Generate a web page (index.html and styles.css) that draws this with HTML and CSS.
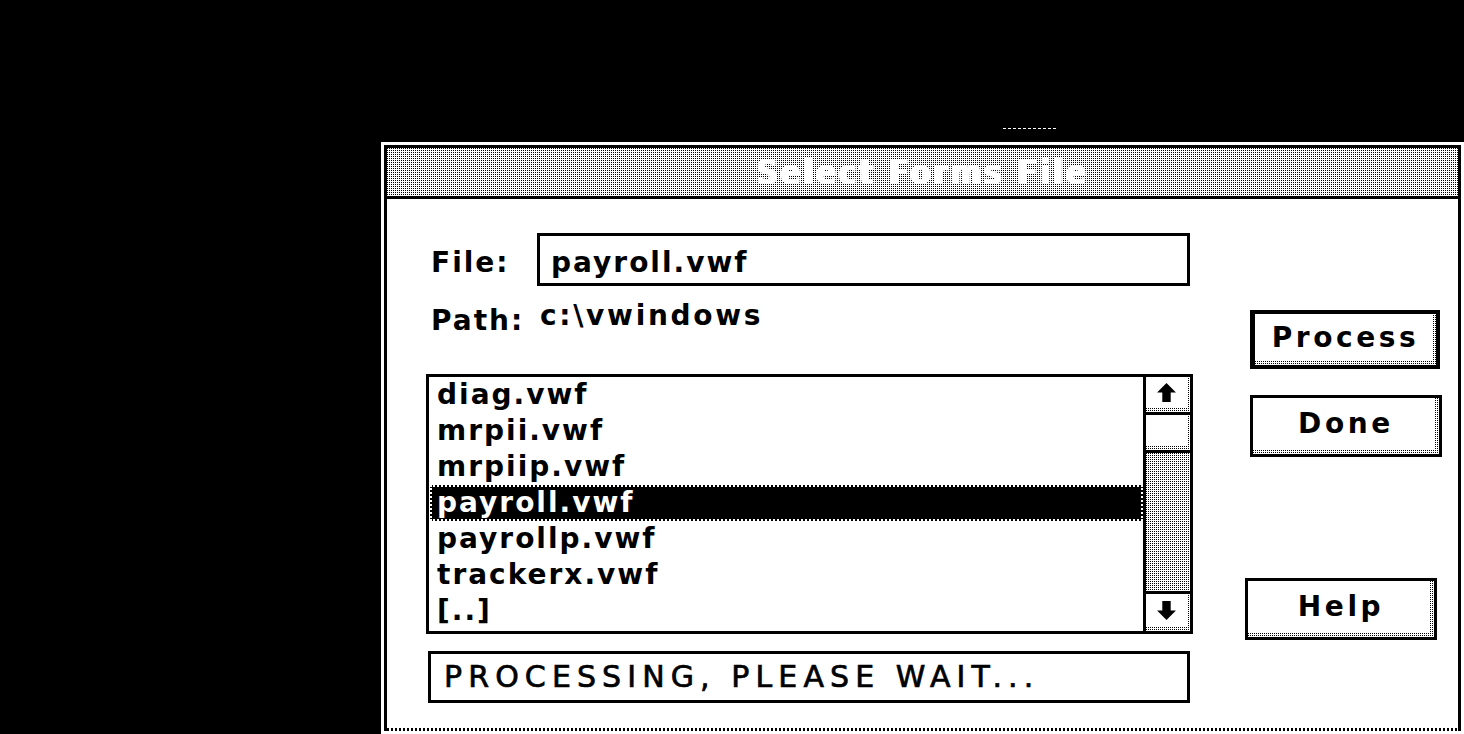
FILE: index.html
```html
<!DOCTYPE html>
<html>
<head>
<meta charset="utf-8">
<title>Select Forms File</title>
<link rel="stylesheet" href="styles.css">
</head>
<body>
<div class="desk-mark"></div>
<div class="dialog">
  <div class="frame">
    <div class="titlebar"><span class="title">Select Forms File</span></div>
    <div class="content">
      <div class="left">
        <div class="file-row">
          <span class="label">File:</span>
          <div class="input">payroll.vwf</div>
        </div>
        <div class="path-row">
          <span class="label path-label">Path:</span>
          <span class="path-value">c:\vwindows</span>
        </div>
        <div class="listbox">
          <ul class="items">
            <li>diag.vwf</li>
            <li>mrpii.vwf</li>
            <li>mrpiip.vwf</li>
            <li class="selected">payroll.vwf</li>
            <li>payrollp.vwf</li>
            <li>trackerx.vwf</li>
            <li>[..]</li>
          </ul>
          <div class="scrollbar">
            <div class="sb-btn sb-up">
              <svg width="21" height="21" viewBox="0 0 20 20"><polygon points="10,1 19,10 14,10 14,19 6,19 6,10 1,10" fill="#000"/></svg>
            </div>
            <div class="sb-thumb"></div>
            <div class="sb-track"></div>
            <div class="sb-btn sb-down">
              <svg width="21" height="21" viewBox="0 0 20 20"><polygon points="10,19 19,10 14,10 14,1 6,1 6,10 1,10" fill="#000"/></svg>
            </div>
          </div>
        </div>
        <div class="status">PROCESSING, PLEASE WAIT...</div>
      </div>
      <div class="right">
        <div class="btn btn-default btn-process">Process</div>
        <div class="btn btn-done">Done</div>
        <div class="btn btn-help">Help</div>
      </div>
    </div>
    <div class="bottom-edge"></div>
  </div>
</div>
</body>
</html>
```

FILE: styles.css
```css
* { box-sizing: border-box; }
html, body { margin: 0; padding: 0; }
body {
  background: #000;
  width: 1464px;
  height: 734px;
  overflow: hidden;
  padding-top: 128px;
  font-family: "DejaVu Sans", "Liberation Sans", sans-serif;
  color: #000;
}
.desk-mark {
  margin-left: 1003px;
  width: 54px;
  height: 1px;
  background: repeating-linear-gradient(90deg, #fff 0 3px, transparent 3px 5px);
}
.dialog {
  margin: 13px 0 0 381px;
  width: 1083px;
  height: 592px;
  padding: 3px;
  background: #fff;
}
.frame {
  height: 100%;
  border: 3px solid #000;
  border-bottom: 0;
  display: flex;
  flex-direction: column;
  background: #fff;
}
.titlebar {
  height: 51px;
  border-bottom: 3px solid #000;
  display: flex;
  align-items: center;
  justify-content: center;
  background:
    repeating-linear-gradient(0deg, #fff 0 1px, transparent 1px 2px),
    repeating-linear-gradient(90deg, #000 0 1px, #fff 1px 2px);
}
.title {
  font-family: "DejaVu Sans Condensed", "DejaVu Sans", sans-serif;
  font-stretch: condensed;
  font-weight: bold;
  font-size: 33px;
  letter-spacing: 2.6px;
  color: #fff;
  line-height: 1;
  text-shadow: 1px 0 0 #fff, -1px 0 0 #fff;
}
.content {
  flex: 1;
  display: flex;
  padding-left: 39px;
}
.left {
  width: 767px;
  display: flex;
  flex-direction: column;
}
.label, .path-value, .input, .items li, .btn {
  font-weight: bold;
  font-size: 28px;
  letter-spacing: 2px;
  line-height: 36px;
}
.file-row {
  margin-top: 34px;
  display: flex;
  height: 53px;
}
.label {
  width: 111px;
  padding-left: 5px;
  padding-top: 12px;
}
.input {
  width: 653px;
  height: 53px;
  border: 3px solid #000;
  padding: 9px 0 0 11px;
}
.path-row {
  margin-top: 12px;
  display: flex;
  height: 41px;
}
.path-label {
  width: 114px;
  padding-top: 5px;
}
.path-value {
  padding-top: 0;
  letter-spacing: 2.7px;
}
.listbox {
  margin-top: 35px;
  width: 767px;
  height: 260px;
  border: 3px solid #000;
  display: flex;
}
.items {
  flex: 1;
  list-style: none;
  margin: 0;
  padding: 0 0 0 1px;
  overflow: hidden;
}
.items li {
  height: 36px;
  padding-left: 7px;
  white-space: nowrap;
}
.items li.selected {
  background: #000;
  color: #fff;
  outline: 2px dotted #fff;
  outline-offset: -2px;
}
.scrollbar {
  width: 47px;
  border-left: 3px solid #000;
  display: flex;
  flex-direction: column;
}
.sb-btn, .sb-thumb {
  background:
    linear-gradient(#fff, #fff) 0 0 / calc(100% - 3px) calc(100% - 4px) no-repeat,
    repeating-linear-gradient(0deg, #fff 0 1px, transparent 1px 2px),
    repeating-linear-gradient(90deg, #000 0 1px, #fff 1px 2px);
}
.sb-btn {
  display: flex;
  align-items: center;
  justify-content: center;
  padding: 0 3px 4px 0;
}
.sb-up {
  height: 38px;
  border-bottom: 3px solid #000;
}
.sb-thumb {
  height: 38px;
  border-bottom: 3px solid #000;
}
.sb-track {
  flex: 1;
  background:
    repeating-linear-gradient(0deg, #fff 0 1px, transparent 1px 2px),
    repeating-linear-gradient(90deg, #000 0 1px, #fff 1px 2px);
}
.sb-down {
  height: 40px;
  border-top: 3px solid #000;
}
.status {
  margin: 17px 0 0 2px;
  width: 762px;
  height: 52px;
  border: 3px solid #000;
  padding-left: 13px;
  font-size: 30px;
  line-height: 46px;
  letter-spacing: 6.1px;
  white-space: nowrap;
  -webkit-text-stroke: 0.7px #000;
}
.right {
  display: flex;
  flex-direction: column;
}
.btn {
  display: flex;
  align-items: center;
  justify-content: center;
  border: 3px solid #000;
  letter-spacing: 3.6px;
  padding-bottom: 4px;
  background:
    linear-gradient(#fff, #fff) 0 0 / calc(100% - 4px) calc(100% - 4px) no-repeat,
    repeating-linear-gradient(0deg, #fff 0 1px, transparent 1px 2px),
    repeating-linear-gradient(90deg, #000 0 1px, #fff 1px 2px);
}
.btn-default {
  border-width: 4px;
  border-left-width: 5px;
}
.btn-process {
  margin: 111px 0 0 57px;
  width: 190px;
  height: 59px;
}
.btn-done {
  margin: 26px 0 0 57px;
  width: 192px;
  height: 62px;
}
.btn-help {
  margin: 121px 0 0 52px;
  width: 192px;
  height: 62px;
}
.bottom-edge {
  height: 3px;
  background:
    repeating-linear-gradient(90deg, #000 0 2px, #fff 2px 4px);
}
```
